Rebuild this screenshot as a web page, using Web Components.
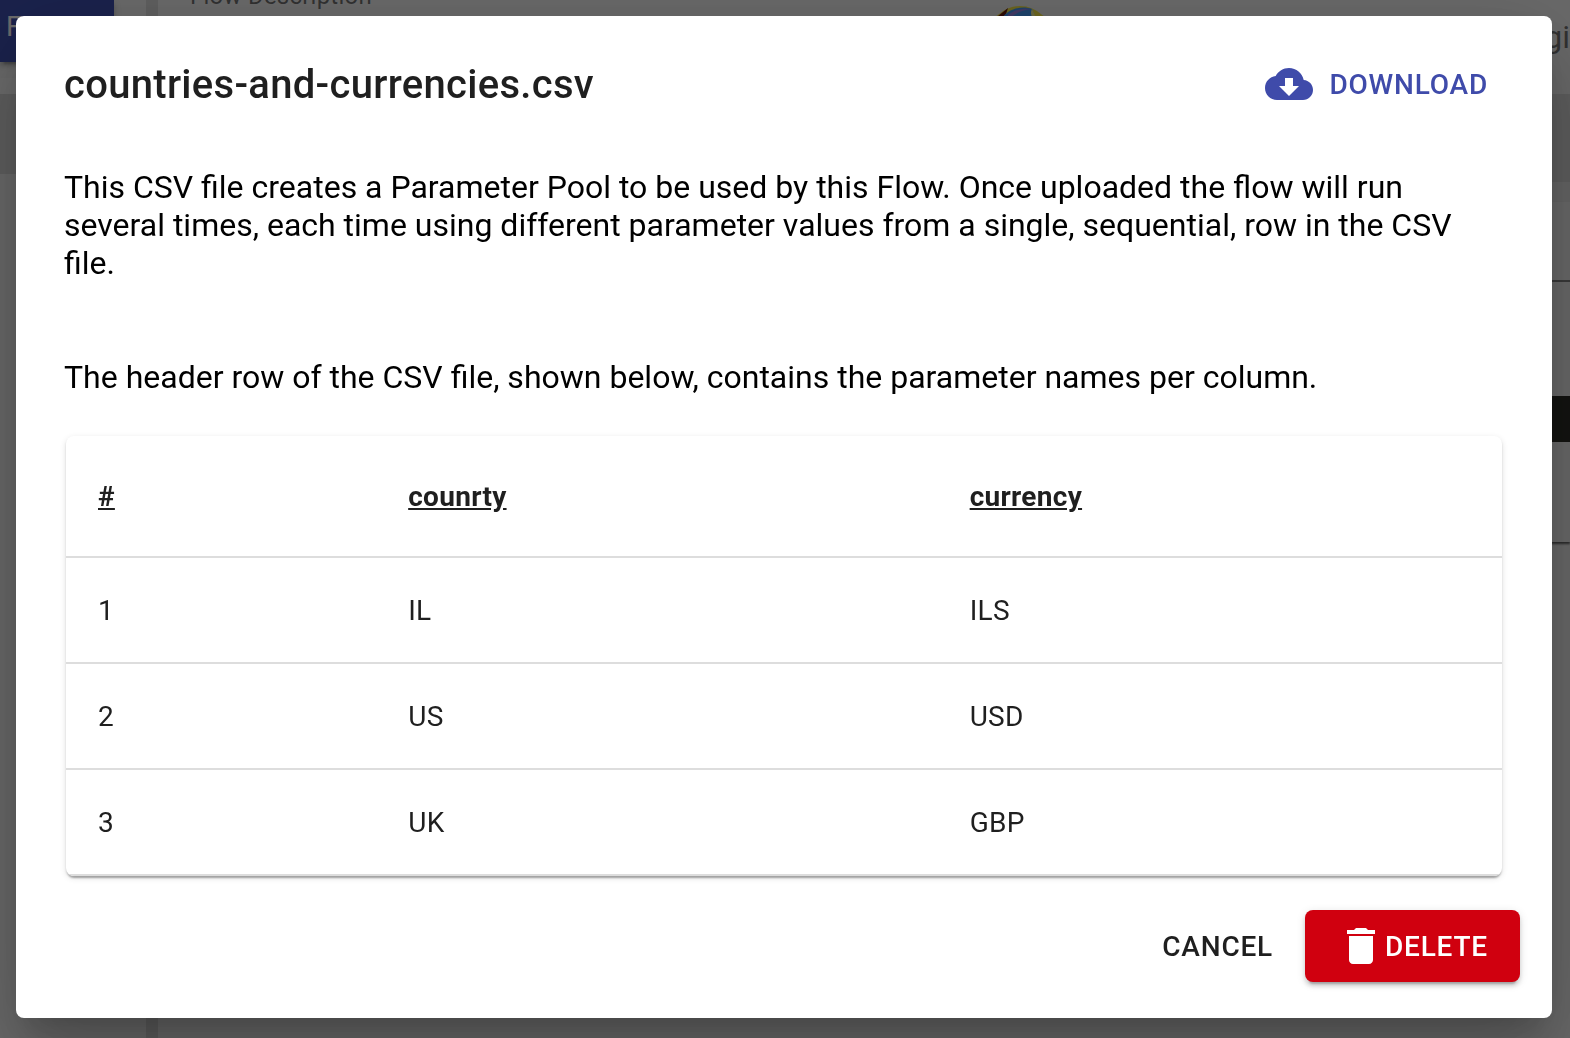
<!DOCTYPE html>
<html lang="en">
<head>
<meta charset="utf-8">
<title>countries-and-currencies.csv</title>
<style>
html, body { height: 100%; }
body { margin: 0; overflow: hidden; font-family: Roboto, "Liberation Sans", sans-serif; color: rgba(0,0,0,.87); background: #fafafa; }
</style>
</head>
<body>
<flow-workspace></flow-workspace>
<modal-dialog>
  <csv-title slot="title" name="countries-and-currencies.csv"></csv-title>
  <p>This CSV file creates a Parameter Pool to be used by this Flow. Once uploaded the flow will run several times, each time using different parameter values from a single, sequential, row in the CSV file.</p>
  <p>The header row of the CSV file, shown below, contains the parameter names per column.</p>
  <csv-table></csv-table>
  <action-button slot="actions" variant="text">Cancel</action-button>
  <action-button slot="actions" variant="danger"><svg slot="icon" viewBox="0 0 24 24" width="48" height="48" aria-hidden="true"><path fill="currentColor" d="M6 19c0 1.1.9 2 2 2h8c1.1 0 2-.9 2-2V7H6v12zM19 4h-3.5l-1-1h-5l-1 1H5v2h14V4z"/></svg>Delete</action-button>
</modal-dialog>
<script>
class ShadowElement extends HTMLElement {
  constructor() {
    super();
    this.attachShadow({ mode: 'open' }).innerHTML = this.render();
  }
}

/* The flow editor that lies behind the dialog. */
customElements.define('flow-workspace', class extends ShadowElement {
  render() {
    return `<style>
      :host { display: flex; height: 100%; background: #fafafa; }
      aside { width: 146px; flex: none; display: flex; flex-direction: column; }
      .tool { width: 114px; height: 62px; box-sizing: border-box; border: 0; padding: 0 0 8px 6px; text-align: left; font: 400 28px/36px Roboto, sans-serif; color: #fff; background: #3f51b5; box-shadow: 0 6px 2px -4px rgba(0,0,0,.2), 0 4px 4px rgba(0,0,0,.14), 0 2px 10px rgba(0,0,0,.12); }
      .strip { height: 16px; margin-top: 16px; background: #fff; }
      .band { height: 80px; background: #e0e0e0; }
      .split { width: 12px; flex: none; background: #e0e0e0; }
      main { flex: 1; display: flex; flex-direction: column; }
      header { height: 94px; box-sizing: border-box; display: flex; align-items: flex-start; padding-left: 32px; }
      .label { font-size: 24px; line-height: 28px; margin-top: -18px; color: rgba(0,0,0,.54); letter-spacing: .00938em; }
      .ball { width: 64px; height: 64px; margin-top: 6px; margin-left: 616px; }
      .user { font-size: 32px; line-height: 38px; margin-top: 18px; margin-left: auto; color: rgba(0,0,0,.54); }
      .bar { height: 88px; background: #e0e0e0; }
      .sub { height: 20px; background: #f0f0f0; }
      .card { display: flow-root; height: 340px; box-sizing: border-box; background: #fafafa; box-shadow: 0 2px 2px rgba(0,0,0,.6); }
      .line { height: 2px; margin-top: 78px; background: #888; }
      .code { height: 46px; margin-top: 114px; background: #2e2f28; }
    </style>
    <aside><button class="tool">F</button><div class="strip"></div><div class="band"></div></aside>
    <div class="split"></div>
    <main>
      <header><span class="label">Flow Description</span>
        <svg class="ball" viewBox="0 0 64 64" aria-hidden="true"><circle cx="32" cy="32" r="32" fill="#fff04a"/><path d="M5 14 20 2l-3 9-8 6z" fill="#6b180c"/><path d="M14 12C20 3 34-1 44 3l5 13H10z" fill="#48a0ff"/><path d="M20 9c8-6 16-7 23-6-10 1-16 5-24 11z" fill="#9d88f0"/><path d="M44 3c-2 3-1 8 3 14l3-1z" fill="#f6f6a0"/></svg>
        <span class="user">gi</span></header>
      <div class="bar"></div><div class="sub"></div>
      <section class="card"><div class="line"></div><div class="code"></div></section>
    </main>`;
  }
});

customElements.define('modal-dialog', class extends ShadowElement {
  render() {
    return `<style>
      :host { position: fixed; inset: 0; box-sizing: border-box; padding: 16px 18px 20px 16px; display: flex; flex-direction: column; background: rgba(0,0,0,.58); }
      .paper { display: flex; flex-direction: column; background: #fff; border-radius: 8px; box-shadow: 0 22px 30px -14px rgba(0,0,0,.2), 0 48px 76px 6px rgba(0,0,0,.14), 0 18px 92px 16px rgba(0,0,0,.12); }
      .head { padding: 32px 48px; }
      .body { padding: 16px 48px 0; font-size: 32px; line-height: 38px; color: #000; display: flex; flex-direction: column; }
      ::slotted(p) { margin: 0 0 76px; }
      ::slotted(p:nth-of-type(2)) { margin-bottom: 40px; }
      .foot { display: flex; justify-content: flex-end; gap: 16px; padding: 34px 32px 36px; }
    </style>
    <div class="paper" role="dialog" aria-modal="true">
      <div class="head"><slot name="title"></slot></div>
      <div class="body"><slot></slot></div>
      <div class="foot"><slot name="actions"></slot></div>
    </div>`;
  }
});

customElements.define('csv-title', class extends ShadowElement {
  render() {
    return `<style>
      :host { display: flex; justify-content: space-between; align-items: center; }
      h2 { margin: 0; padding-top: 2px; font-size: 40px; line-height: 64px; font-weight: 500; letter-spacing: .0075em; color: #1f1f1f; }
    </style>
    <h2>${this.getAttribute('name')}</h2>
    <action-button variant="primary"><svg slot="icon" viewBox="0 0 24 24" width="48" height="48" aria-hidden="true"><path fill="currentColor" d="M19.35 10.04C18.67 6.59 15.64 4 12 4 9.11 4 6.6 5.64 5.35 8.04 2.34 8.36 0 10.91 0 14c0 3.31 2.69 6 6 6h13c2.76 0 5-2.24 5-5 0-2.64-2.05-4.78-4.65-4.96zM17 13l-5 5-5-5h3V9h4v4h3z"/></svg>Download</action-button>`;
  }
});

customElements.define('action-button', class extends ShadowElement {
  render() {
    return `<style>
      :host { display: block; }
      button { display: flex; align-items: center; height: 72px; padding: 0 16px; border: 0; border-radius: 8px; background: none; color: #1f1f1f; font: 500 28px/48px Roboto, "Liberation Sans", sans-serif; letter-spacing: .02857em; text-transform: uppercase; cursor: pointer; }
      span { padding-top: 2px; }
      ::slotted(svg) { display: block; }
      :host([variant=primary]) button { color: #3f4baa; gap: 16px; }
      :host([variant=danger]) button { padding: 0 32px; color: #fff; background: #d0000f; box-shadow: 0 6px 2px -4px rgba(0,0,0,.2), 0 4px 4px rgba(0,0,0,.14), 0 2px 10px rgba(0,0,0,.12); }
    </style>
    <button type="button"><slot name="icon"></slot><span><slot></slot></span></button>`;
  }
});

customElements.define('csv-table', class extends ShadowElement {
  render() {
    const rows = [['1', 'IL', 'ILS'], ['2', 'US', 'USD'], ['3', 'UK', 'GBP']];
    return `<style>
      :host { display: block; margin: 0 2px; border-radius: 8px; background: #fff; overflow: hidden; box-shadow: 0 4px 2px -2px rgba(0,0,0,.2), 0 2px 2px rgba(0,0,0,.14), 0 2px 6px rgba(0,0,0,.12); }
      table { width: 100%; table-layout: fixed; border-collapse: separate; border-spacing: 0; color: #1f1f1f; font-size: 28px; line-height: 40px; letter-spacing: .01071em; }
      col:first-child { width: 21.6%; }
      col:nth-child(2) { width: 39.1%; }
      th, td { padding: 33px 32px 31px; text-align: left; border-bottom: 2px solid #ddd; font-weight: 400; }
      th { padding: 41px 32px 39px; font-weight: 700; }
    </style>
    <table><colgroup><col><col><col></colgroup>
      <thead><tr><th><u>#</u></th><th><u>counrty</u></th><th><u>currency</u></th></tr></thead>
      <tbody>${rows.map(r => `<tr>${r.map(c => `<td>${c}</td>`).join('')}</tr>`).join('')}</tbody>
    </table>`;
  }
});
</script>
</body>
</html>
